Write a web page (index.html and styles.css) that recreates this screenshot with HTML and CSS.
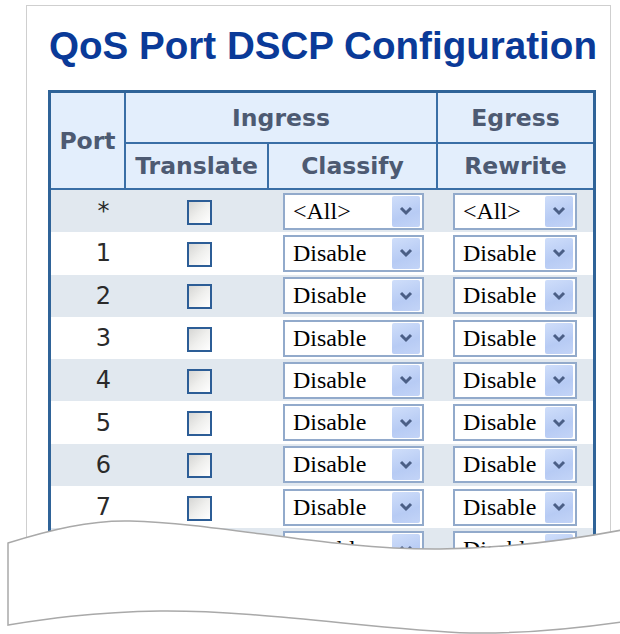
FILE: index.html
```html
<!DOCTYPE html>
<html lang="en">
<head>
    <meta charset="UTF-8">
    <title>QoS Port DSCP Configuration</title>
    <link rel="stylesheet" href="styles.css">
</head>
<body>
    <div class="frame">
        <h1 class="title">QoS Port DSCP Configuration</h1>

        <table class="config">
            <colgroup>
                <col class="col-port">
                <col class="col-translate">
                <col class="col-classify">
                <col class="col-rewrite">
            </colgroup>
            <thead>
                <tr class="head-top">
                    <th rowspan="2" class="port-head">Port</th>
                    <th colspan="2">Ingress</th>
                    <th class="last">Egress</th>
                </tr>
                <tr class="head-sub">
                    <th>Translate</th>
                    <th>Classify</th>
                    <th class="last">Rewrite</th>
                </tr>
            </thead>
            <tbody id="port-rows">
                <!-- строки портов -->
            </tbody>
        </table>
    </div>

    <!-- оторванный край страницы -->
    <svg class="tear" width="620" height="124" viewBox="0 0 620 124">
        <path class="tear-cover" d="M0,112 C40,110 90,102 160,101 C260,100 380,120 470,123 C530,124 580,118 622,112 L622,124 L0,124 Z"/>
        <path class="tear-paper" d="M8,33 C50,20 90,10 130,11 C220,13 330,40 440,39 C520,38 580,28 622,20 L622,112 C580,118 530,124 470,123 C380,120 260,100 160,101 C90,102 40,110 8,115 Z"/>
    </svg>

    <script>
        var ports = ['*', '1', '2', '3', '4', '5', '6', '7', '8'];
        var chevron = '<svg width="14" height="10" viewBox="0 0 14 10"><path d="M2,2 L7,7 L12,2" fill="none" stroke="#4b5f86" stroke-width="3"/></svg>';

        function selectBox(value) {
            return '<div class="select"><span>' + value + '</span><i class="drop">' + chevron + '</i></div>';
        }

        var tbody = document.getElementById('port-rows');
        ports.forEach(function(port, i) {
            var value = port === '*' ? '&lt;All&gt;' : 'Disable';
            var row = document.createElement('tr');
            if (i % 2 === 0) {
                row.className = 'shaded';
            }
            row.innerHTML =
                '<td class="port-cell">' + port + '</td>' +
                '<td class="check-cell"><span class="check"></span></td>' +
                '<td class="classify-cell">' + selectBox(value) + '</td>' +
                '<td class="rewrite-cell">' + selectBox(value) + '</td>';
            tbody.appendChild(row);
        });
    </script>
</body>
</html>
```

FILE: styles.css
```css
html, body {
    margin: 0;
    height: 100%;
    overflow: hidden;
    background: #fff;
}

.frame {
    margin: 5px 0 0 26px;
    width: 585px;
    height: 629px;
    border: 1px solid #cfcfcf;
    border-bottom: none;
    padding: 0 0 0 21px;
    box-sizing: border-box;
}

.title {
    margin: 0;
    padding: 18px 0 0 1px;
    height: 69px;
    box-sizing: border-box;
    font-family: "Liberation Sans", Arial, sans-serif;
    font-size: 38.6px;
    font-weight: bold;
    color: #0a3a98;
    line-height: 44px;
    white-space: nowrap;
}

/* таблица */
.config {
    width: 548px;
    table-layout: fixed;
    border-collapse: separate;
    border-spacing: 0;
    border: 3px solid #2f6398;
    margin-top: 15px;
}

.col-port { width: 75px; }
.col-translate { width: 143px; }
.col-classify { width: 169px; }
.col-rewrite { width: 155px; }

.config th {
    background: #e3eefc;
    color: #4d5a72;
    font-family: "DejaVu Sans", Verdana, sans-serif;
    font-size: 23.5px;
    font-weight: bold;
    text-align: center;
    padding: 0;
    border-right: 2px solid #3a6ea6;
    border-bottom: 2px solid #3a6ea6;
}

.config th.last {
    border-right: none;
}

.head-top th {
    height: 51px;
    box-sizing: border-box;
}

.head-sub th {
    height: 46px;
    box-sizing: border-box;
}

.config td {
    height: 42.3px;
    padding: 0;
    font-family: "DejaVu Sans", Verdana, sans-serif;
    font-size: 24px;
    color: #2a2a2a;
}

.config tr.shaded td {
    background: #e1e8ef;
}

.port-cell {
    text-align: center;
    padding-left: 30px !important;
}

.check-cell {
    text-align: center;
    padding-left: 4px !important;
}

.check {
    display: inline-block;
    width: 25px;
    height: 25px;
    box-sizing: border-box;
    border: 2px solid #2c5d96;
    background: linear-gradient(135deg, #d6d6d4 0%, #efefed 50%, #ffffff 100%);
    vertical-align: middle;
}

/* выпадающие списки */
.select {
    display: flex;
    align-items: center;
    justify-content: space-between;
    height: 37px;
    box-sizing: border-box;
    border: 2px solid #92aacb;
    background: #fff;
    padding: 0 2px 0 8px;
    font-family: "Liberation Serif", "Times New Roman", serif;
    font-size: 24px;
    color: #000;
}

.classify-cell .select {
    width: 141px;
    margin-left: 14px;
}

.rewrite-cell .select {
    width: 124px;
    margin-left: 15px;
}

.drop {
    display: flex;
    align-items: center;
    justify-content: center;
    width: 28px;
    height: 31px;
    border-radius: 2px;
    background: linear-gradient(160deg, #cfdefa 0%, #b7cbf4 60%, #c3d4f7 100%);
}

.tear {
    position: absolute;
    left: 0;
    top: 510px;
}

.tear-cover {
    fill: #fff;
}

.tear-paper {
    fill: #fff;
    stroke: #a9a9a9;
    stroke-width: 1.5;
}
```
